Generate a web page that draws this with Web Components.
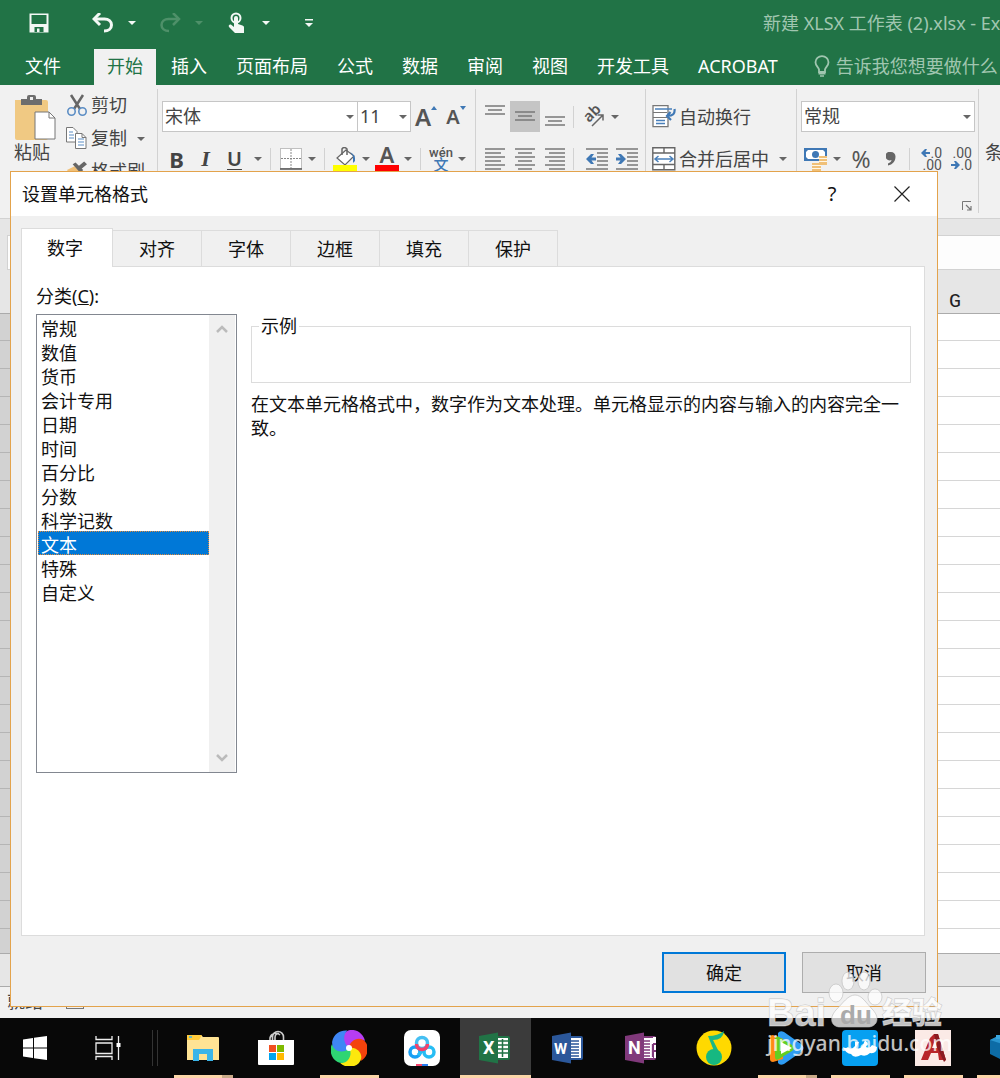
<!DOCTYPE html>
<html lang="zh-CN">
<head>
<meta charset="utf-8">
<title>设置单元格格式</title>
<style>
    body {
        margin: 0;
        font: 18px/24px "Noto Sans", "Noto Sans CJK SC", sans-serif;
        color: #444;
    }
</style>
</head>
<body>
<desktop-screen>
    <excel-window>
        <format-dialog slot="dialog" heading="设置单元格格式">
            <category-list slot="side"></category-list>
            <p slot="main">在文本单元格格式中，数字作为文本处理。单元格显示的内容与输入的内容完全一致。</p>
        </format-dialog>
    </excel-window>
    <task-bar slot="bar"></task-bar>
    <site-watermark slot="overlay"></site-watermark>
</desktop-screen>

<script>
const line = (x1, x2, y) => `<path d="M${x1} ${y}H${x2}" stroke="#777" stroke-width="1.5"/>`;

// name: [width, height, markup]
const ICONS = {
    caret: [8, 4, `<path d="M0 0h8L4 4z" fill="currentColor"/>`],
    save: [20, 20, `<path d="M.5 .5h19v19H.5z" fill="#f3f8f5"/><path d="M2.500 2h15v9h-15zM5.500 14h9v5h-4v-3.500h-2.500V19H5.500z" fill="#217346"/>`],
    undo: [22, 20, `<path d="M2 6h10.500c4 0 7 2.500 7 6s-3 6-7.500 6" fill="none" stroke="currentColor" stroke-width="3"/><path d="M8 0L2 6l6 6" fill="none" stroke="currentColor" stroke-width="3"/>`],
    redo: [22, 20, `<path d="M20 6H9.500c-4 0-7 2.500-7 6s3 6 7.500 6" fill="none" stroke="currentColor" stroke-width="2.500"/><path d="M14 0l6 6-6 6" fill="none" stroke="currentColor" stroke-width="2.500"/>`],
    touch: [18, 22, `<circle cx="8" cy="6" r="4.500" fill="none" stroke="#f3f8f5" stroke-width="2"/><path d="M6 6a2 2 0 0 1 4 0v6l4.500 1.500c1 .5 1.500 1 1.500 2V21H7l-6-6c-1-2 1-3 2.500-2l2.500 2z" fill="#f3f8f5"/>`],
    customize: [8, 8, `<path d="M0 0h8v1.500H0zM0 4h8L4 8z" fill="currentColor"/>`],
    bulb: [16, 22, `<path d="M5 17v-2.500C4.500 12 1.500 11 1.500 7.200a6.500 6 0 0 1 13 0C14.500 11 11.500 12 11 14.500V17z" fill="none" stroke="currentColor" stroke-width="1.800"/><path d="M4.500 17.500h7v2h-7zM6 20.200h4v1.500H6z" fill="currentColor"/>`],
    paste: [42, 46, `<path d="M1 6h31q2 0 2 2v36q0 2-2 2H3q-2 0-2-2z" fill="#f0c983"/><path d="M7 11V5h6V3q0-2 2-2h5q2 0 2 2v2h6v6z" fill="#6d6d6d"/><rect x="16" y="3" width="3" height="3" fill="#eee"/><path d="M21 18h14l6 6v21H21z" fill="#fff" stroke="#777"/><path d="M35 18v6h6" fill="none" stroke="#777"/>`],
    cut: [20, 22, `<path d="M4 1l9 14M16 1L7 15" stroke="#666" stroke-width="2.500"/><circle cx="4.500" cy="17.500" r="3.700" fill="none" stroke="#5b8dc4" stroke-width="1.600"/><circle cx="15.500" cy="17.500" r="3.700" fill="none" stroke="#5b8dc4" stroke-width="1.600"/>`],
    copy: [21, 22, `<path d="M.5 .5H7l4 4V15H.5z" fill="#fff" stroke="#777"/><path d="M3 5h4M3 8h5M3 11h5" stroke="#5b8dc4"/><path d="M9.500 6.500H16l4 4v11H9.500z" fill="#fff" stroke="#777"/><path d="M16 6.500v4h4" fill="none" stroke="#777"/><path d="M12 12h6M12 15h6M12 18h6" stroke="#5b8dc4"/>`],
    brush: [22, 20, `<path d="M1 9l8-4 6 6-6 8z" fill="#f0c078"/><path d="M7 3l3-2 8 8-3 3zM13 5l6-5 3 3-6 5z" fill="#666"/>`],
    borders: [22, 22, `<path d="M.5 .5h21v20H.5z" fill="#fff" stroke="#888" stroke-dasharray="1 1"/><path d="M11 1v19M1 10.500h20" stroke="#888" stroke-dasharray="2 1"/><path d="M0 21h22" stroke="#555" stroke-width="1.500"/>`],
    fill: [24, 24, `<path d="M13 3L4 11l8 7 9-9z" fill="#fff" stroke="#666" stroke-width="1.200"/><path d="M9 8V2q2-3 5 0v6" fill="none" stroke="#666" stroke-width="1.500"/><path d="M17 5q6 3 5 9l-2 2V9z" fill="#3c76b5"/><path d="M0 18h24v6H0z" fill="#ff0"/>`],
    wrap: [24, 23, `<path d="M1 .7h15v21H1z" fill="#fff" stroke="#777" stroke-width="1.300"/><path d="M1 7.500h14M1 12.500h14" stroke="#777"/><path d="M3 4h17M4 15.500h9M4 18.500h9" stroke="#4a80ba" stroke-width="1.300"/><path d="M22.500 4q1 7-7 7M18.500 7L15 11l4 4" fill="none" stroke="#3f78b5" stroke-width="2.200"/>`],
    merge: [24, 24, `<path d="M.8 .8h22v22H.8zM.8 6h22M.8 17.500h22M12 1v5M12 17.500V23" fill="#fff" stroke="#666" stroke-width="1.400"/><path d="M3 12h18M6.500 9L3 12l3.500 3M17.500 9l3.500 3-3.500 3" fill="none" stroke="#4a80ba" stroke-width="1.500"/>`],
    top: [20, 30, line(0, 20, 4) + line(3, 17, 8) + line(0, 20, 12)],
    middle: [20, 30, line(0, 20, 10) + line(3, 17, 14) + line(0, 20, 18)],
    bottom: [20, 30, line(0, 20, 15) + line(3, 17, 19) + line(0, 20, 23)],
    left: [20, 22, [1, 9, 17].map(y => line(0, 20, y) + line(0, 16, y + 4)).join("")],
    center: [20, 22, [1, 9, 17].map(y => line(0, 20, y) + line(3, 17, y + 4)).join("")],
    right: [20, 22, [1, 9, 17].map(y => line(0, 20, y) + line(4, 20, y + 4)).join("")],
    outdent: [22, 22, line(0, 22, 1) + line(11, 22, 5) + line(11, 22, 9) + line(11, 22, 13) + line(11, 22, 17) + line(0, 22, 21) + `<path d="M0 11l5-5h3L5.500 9.500H10v3H5.500L8 16H5z" fill="#3f78b5"/>`],
    indent: [22, 22, line(0, 22, 1) + line(11, 22, 5) + line(11, 22, 9) + line(11, 22, 13) + line(11, 22, 17) + line(0, 22, 21) + `<path d="M10 11L5 6H2l2.500 3.500H0v3h4.500L2 16h3z" fill="#3f78b5"/>`],
    orient: [22, 22, `<text x="0" y="0" transform="translate(6 17) rotate(-45)" font-size="15" font-weight="600" fill="#555">ab</text><path d="M9 20L20 9M14.500 9H20v5.500" fill="none" stroke="#666" stroke-width="1.500"/>`],
    money: [24, 24, `<path d="M0 1h23v13H0z" fill="#3f78b5"/><path d="M4 3h15l2 2v5l-2 2H4l-2-2V5z" fill="#fff"/><circle cx="11.500" cy="7.500" r="3.500" fill="#3f78b5"/><path d="M15 9h8v9h-8zM8 16h9v8H8z" fill="#f0c078"/><path d="M15 11.500h8M15 14.500h8M8 18.500h9M8 21.500h9" stroke="#fff7e6"/>`],
    comma: [10, 14, `<path d="M5 0a4.500 4.500 0 0 1 4.500 4.500c0 5-3 8-7.500 9v-2c2-.7 3.500-2 3.500-3.500A4.300 4.300 0 1 1 5 0z" fill="#666"/>`],
    less: [9, 8, `<path d="M0 4l4-4h2L4.500 3H9v2H4.500L6 8H4z" fill="#3f78b5"/>`],
    more: [9, 8, `<path d="M9 4L5 0H3l1.500 3H0v2h4.500L3 8h2z" fill="#3f78b5"/>`],
    launcher: [10, 10, `<path d="M.5 9V.5H9" fill="none" stroke="#777"/><path d="M4 4l5 5M9 5v4H5" fill="none" stroke="#777" stroke-width="1.200"/>`],
    close: [16, 16, `<path d="M.5 .5l15 15M15.500 .5l-15 15" stroke="#222" stroke-width="1.200"/>`],
    up: [12, 8, `<path d="M1 7l5-5 5 5" fill="none" stroke="#bbb" stroke-width="2.500"/>`],
    down: [12, 8, `<path d="M1 1l5 5 5-5" fill="none" stroke="#bbb" stroke-width="2.500"/>`],
    windows: [26, 26, `<path d="M1 4.500l10-1.500v9.500H1zM12 2.800L25 1v11.500H12zM1 13.500h10V23L1 21.500zM12 13.500h13V25l-13-1.800z" fill="#fff"/>`],
    taskview: [26, 26, `<path d="M1 1v3.500h16V1M1 25v-3.500h16V25M1 8h16v10.500H1zM23.500 1v24" fill="none" stroke="#eee" stroke-width="1.300"/><rect x="21.500" y="8" width="4" height="4" fill="#fff"/>`],
    explorer: [34, 28, `<path d="M1 2q0-1 1-1h13l2 2h15q1 0 1 1v22H1z" fill="#ffe394"/><path d="M1 1h15l-3 5H1z" fill="#ffcb3d"/><path d="M3 3h3" stroke="#3ab5e9" stroke-width="1.500"/><path d="M7 27V15h20v12h-6v-7h-8v7z" fill="#3ab5e9"/>`],
    store: [36, 36, `<path d="M12 12V8a6 6 0 0 1 10-3M14.500 12V7a5.500 5.500 0 0 1 11 0v5M17 12V7.500a4 4 0 0 1 4-4" fill="none" stroke="#ccc" stroke-width="1.600"/><path d="M0 10h36v24q0 1-1 1H1q-1 0-1-1z" fill="#fff"/><path d="M11 15h7v7h-7z" fill="#f25022"/><path d="M19 15h7v7h-7z" fill="#7fba00"/><path d="M11 23h7v7h-7z" fill="#00a4ef"/><path d="M19 23h7v7h-7z" fill="#ffb900"/>`],
    pinwheel: [36, 36, ["#b63df2", "#f4430c", "#fce80e", "#2ed573", "#3f86f5"].map((c, i) => `<path d="M18 18C10 15 9 2 19 0c8-1 14 5 15 11-6-3-13 0-16 7z" fill="${c}" transform="rotate(${i * 72} 18 18)"/>`).join("") + `<circle cx="18" cy="18" r="3" fill="#fff"/>`],
    netdisk: [36, 36, `<rect width="36" height="36" rx="7" fill="#fff"/><circle cx="11" cy="22" r="5" fill="none" stroke="#18a0f5" stroke-width="3.500"/><circle cx="25" cy="22" r="5" fill="none" stroke="#27bdf4" stroke-width="3.500"/><path d="M14 25l8-7" stroke="#27bdf4" stroke-width="3"/><circle cx="18" cy="13" r="5.500" fill="none" stroke="#45bff2" stroke-width="3.500"/><path d="M12.500 14a5.500 5.500 0 0 0 11 0" fill="none" stroke="#f4426b" stroke-width="3.500"/><path d="M12 34h6v2h-6z" fill="#f4426b"/><path d="M18 34h6v2h-6z" fill="#287df0"/>`],
    excel: [34, 32, `<path d="M18 4h12q2 0 2 2v20q0 2-2 2H18z" fill="#217346"/><path d="M19 6h11v20H19z" fill="#fff"/><path d="M19 9h11M19 13h11M19 17h11M19 21h11M24.500 7v18" stroke="#217346" stroke-width="1.500"/><path d="M1 4l19-3.500v31L1 28z" fill="#217346"/><text x="5" y="22" font-size="18" font-weight="700" fill="#fff" font-family="Roboto, sans-serif">X</text>`],
    word: [34, 32, `<path d="M18 4h12q2 0 2 2v20q0 2-2 2H18z" fill="#2b579a"/><path d="M19 6h11v20H19z" fill="#fff"/><path d="M19 9h9M19 12h9M19 15h9M19 18h9M19 21h9M19 24h9" stroke="#2b579a" stroke-width="1.300"/><path d="M1 4l19-3.500v31L1 28z" fill="#2b579a"/><text x="3" y="22" font-size="15" font-weight="700" fill="#fff" font-family="Roboto, sans-serif">W</text>`],
    onenote: [34, 32, `<path d="M18 4h12q2 0 2 2v20q0 2-2 2H18z" fill="#80397b"/><path d="M19 6h10v20H19zM29 5h3v6h-3zM30 13h2v5h-2zM30 20h2v6h-2z" fill="#fff"/><path d="M19 9h7M19 12h7M19 15h7M19 18h7M19 21h7M19 24h7M28.500 12v13" stroke="#80397b" stroke-width="1.300"/><path d="M1 4l19-3.500v31L1 28z" fill="#80397b"/><text x="4" y="22" font-size="18" font-weight="700" fill="#fff" font-family="Roboto, sans-serif">N</text>`],
    music: [36, 36, `<circle cx="18" cy="18" r="17.500" fill="#ffd900"/><path d="M28 1q-1 9-11 9l7 14-4 2L12 6q10 0 16-5z" fill="#1cb784"/><circle cx="18" cy="27" r="8" fill="#16b881"/>`],
    video: [36, 36, `<path d="M9 3q2-3 6-1l17 12q5 4 0 8L15 34q-4 2-6-1z" fill="#2e9cf3"/><path d="M1 8q0-3 3-3l10 4v20L4 32q-3 0-3-3z" fill="#ff8a14"/><path d="M6 9q0-4 4-2l13 8q4 3 0 6l-13 8q-4 2-4-2z" fill="#65cf21"/><path d="M12 12l11 6-11 6z" fill="#fff"/>`],
    whale: [36, 36, `<rect width="36" height="36" rx="4" fill="#06a0f1"/><path d="M1 17q3 2 5 0 3 4 7-1v-4h4l-3 6q4 2 7-3l2-5 3 3-2 4q4 2 6-2l5 2q0 7-7 6-4 4-9 2-7 4-10-1-5 0-8-7z" fill="#fff"/>`],
    autocad: [36, 36, `<path d="M0 0h36v36H0z" fill="#fbeae6"/><path d="M6 30L15 8l4-4h4l8 26h-7l-1-7h-7l-3 7zm11-12h5l-2-8z" fill="#b82529" fill-rule="evenodd"/><path d="M19 4h4l8 26-2 2-7-15z" fill="#8a1a20"/>`],
    bricks: [36, 36, `<path d="M2 10l10-5 22 3v16L18 32 2 24z" fill="#0d6ca6"/><path d="M2 10l10-5 22 3-16 7z" fill="#2a95cf"/><path d="M8 5h5v4H8z" fill="#3aa6dd"/>`]
};

const SHARED = `
    * { box-sizing: border-box; }
    button, select { font: inherit; color: inherit; }
    button { border: 0; padding: 0; background: none; }
`;

class BaseElement extends HTMLElement {
    constructor() {
        super();
        this.attachShadow({ mode: "open" });
    }

    connectedCallback() {
        this.shadowRoot.innerHTML = `<style>${SHARED}</style>${this.render()}`;
    }
}

class UiIcon extends BaseElement {
    render() {
        const [w, h, markup] = ICONS[this.getAttribute("name")];
        return `
            <style>
                :host { display: inline-flex; flex: none; }
                svg { display: block; }
            </style>
            <svg width="${w}" height="${h}" viewBox="0 0 ${w} ${h}" aria-hidden="true">${markup}</svg>
        `;
    }
}

class DesktopScreen extends BaseElement {
    render() {
        return `
            <style>
                :host {
                    display: flex;
                    flex-direction: column;
                    position: relative;
                    min-height: 100vh;
                    overflow: hidden;
                }
                ::slotted(excel-window) { flex: 1; }
            </style>
            <slot></slot>
            <slot name="bar"></slot>
            <slot name="overlay"></slot>
        `;
    }
}

class ExcelWindow extends BaseElement {
    render() {
        return `
            <style>
                :host {
                    display: flex;
                    flex-direction: column;
                    position: relative;
                    background: #f1f1f1;
                    min-width: 0;
                }
                sheet-grid { flex: 1; }
                .formula {
                    height: 52px;
                    padding: 16px 0 0 7px;
                    background: #e6e6e6;
                    border-top: 1px solid #d2d2d2;
                }
                .formula div {
                    height: 35px;
                    background: #fdfdfd;
                    border: 1px solid #d2d2d2;
                    border-right: 0;
                }
                .sheets {
                    height: 34px;
                    background: #e6e6e6;
                    border: solid #ababab;
                    border-width: 1px 0;
                }
                .status {
                    display: flex;
                    align-items: center;
                    gap: 23px;
                    height: 31px;
                    padding: 0 0 4px 7px;
                }
                .macro {
                    width: 18px;
                    height: 16px;
                    border: 1px solid #777;
                }
                /* modeless window floating above the workbook */
                ::slotted(format-dialog) {
                    position: absolute;
                    inset: 171px 62px 11px 10px;
                }
            </style>
            <title-bar></title-bar>
            <ribbon-tabs></ribbon-tabs>
            <ribbon-bar></ribbon-bar>
            <div class="formula"><div></div></div>
            <sheet-grid></sheet-grid>
            <div class="sheets"></div>
            <div class="status"><span>就绪</span><span class="macro"></span></div>
            <slot name="dialog"></slot>
        `;
    }
}

class TitleBar extends BaseElement {
    render() {
        return `
            <style>
                :host {
                    display: flex;
                    align-items: center;
                    height: 49px;
                    padding: 0 0 3px 24px;
                    background: #217346;
                    color: #f3f8f5;
                    white-space: nowrap;
                    overflow: hidden;
                }
                button {
                    display: flex;
                    align-items: center;
                    justify-content: center;
                    flex: none;
                    width: 30px;
                    height: 30px;
                }
                .split { display: flex; gap: 4px; margin-left: 34px; }
                .split + .split { margin-left: 13px; }
                .split button + button { width: 20px; }
                .off { color: #4e9069; }
                .more { margin-left: 18px; }
                .title {
                    width: 237px;
                    margin-left: auto;
                    color: #a0c6b0;
                    overflow: hidden;
                }
            </style>
            <button aria-label="保存"><ui-icon name="save"></ui-icon></button>
            <div class="split">
                <button aria-label="撤消"><ui-icon name="undo"></ui-icon></button>
                <button aria-label="撤消列表"><ui-icon name="caret"></ui-icon></button>
            </div>
            <div class="split off">
                <button aria-label="恢复"><ui-icon name="redo"></ui-icon></button>
                <button aria-label="恢复列表"><ui-icon name="caret"></ui-icon></button>
            </div>
            <div class="split">
                <button aria-label="触摸模式"><ui-icon name="touch"></ui-icon></button>
                <button aria-label="触摸选项"><ui-icon name="caret"></ui-icon></button>
            </div>
            <button class="more" aria-label="自定义快速访问工具栏"><ui-icon name="customize"></ui-icon></button>
            <div class="title">新建 XLSX 工作表 (2).xlsx - Excel</div>
        `;
    }
}

class RibbonTabs extends BaseElement {
    render() {
        const tabs = ["开始", "插入", "页面布局", "公式", "数据", "审阅", "视图", "开发工具", "ACROBAT"];
        return `
            <style>
                :host {
                    display: flex;
                    gap: 1px;
                    height: 36px;
                    background: #217346;
                    color: #fff;
                    white-space: nowrap;
                    overflow: hidden;
                }
                button { flex: none; padding: 0 14px 2px; }
                .file { padding: 0 32px 2px 25px; }
                .active { padding: 0 13px 2px; background: #f1f1f1; color: #217346; }
                .tell {
                    display: flex;
                    align-items: center;
                    gap: 6px;
                    margin-left: 7px;
                    color: #a0c6b0;
                }
            </style>
            <button class="file">文件</button>
            ${tabs.map((t, i) => `<button class="${i ? "" : "active"}">${t}</button>`).join("")}
            <button class="tell"><ui-icon name="bulb"></ui-icon>告诉我您想要做什么</button>
        `;
    }
}

class RibbonGroup extends BaseElement {
    render() {
        return `
            <style>
                :host {
                    display: flex;
                    flex: none;
                    margin: 4px 0 5px;
                    padding: 0 4px;
                    border-right: 1px solid #d2d2d2;
                }
            </style>
            <slot></slot>
        `;
    }
}

class ComboBox extends BaseElement {
    render() {
        return `
            <style>
                :host { display: grid; flex: none; height: 31px; }
                select, ui-icon { grid-area: 1 / 1; }
                select {
                    appearance: none;
                    width: 100%;
                    padding: 0 0 2px 2px;
                    border: 1px solid #c6c6c6;
                    border-radius: 0;
                    background: #fff;
                }
                ui-icon {
                    place-self: center end;
                    margin-right: 4px;
                    color: #666;
                    pointer-events: none;
                }
            </style>
            <select aria-label="${this.getAttribute("label")}"><option>${this.getAttribute("value")}</option></select>
            <ui-icon name="caret"></ui-icon>
        `;
    }
}

class RibbonBar extends BaseElement {
    tool(name, label) {
        return `<button class="tool" aria-label="${label}"><ui-icon name="${name}"></ui-icon></button>`;
    }

    wide(name, label, extra = "") {
        return `<button class="tool wide ${extra}" aria-label="${label}"><ui-icon name="${name}"></ui-icon></button>`;
    }

    render() {
        const caret = `<button class="caret" aria-label="更多"><ui-icon name="caret"></ui-icon></button>`;
        return `
            <style>
                :host {
                    display: flex;
                    height: 133px;
                    background: #f1f1f1;
                    white-space: nowrap;
                    overflow: hidden;
                }
                button { display: flex; align-items: center; flex: none; }
                .rows {
                    display: flex;
                    flex-direction: column;
                    gap: 11px;
                    padding-top: 12px;
                }
                .row { display: flex; align-items: center; height: 31px; }
                .tool { justify-content: center; width: 24px; height: 31px; }
                .wide { width: 30px; }
                .on { background: #c5c5c5; }
                .caret { justify-content: center; width: 18px; height: 31px; color: #666; }
                .sep { width: 1px; height: 22px; margin: 0 8px 0 3px; background: #d2d2d2; }
                .clip { padding: 0 7px 0 14px; }
                .paste { flex-direction: column; margin-top: 5px; align-self: flex-start; align-items: flex-start; }
                .small { margin-left: 10px; }
                .small .row { height: 33px; }
                .small ui-icon { width: 21px; justify-content: center; }
                .small .text { gap: 4px; padding-bottom: 1px; }
                .text { gap: 3px; }
                .text + .caret { margin-left: 5px; }
                .family { width: 196px; }
                .size { width: 54px; margin-left: -1px; }
                .format { width: 174px; }
                .biu { width: 29px; font-size: 22px; font-weight: 700; color: #444; }
                .italic { font-family: "Liberation Serif", serif; font-style: italic; }
                .under { font-size: 20px; text-decoration: underline; text-underline-offset: 3px; text-decoration-thickness: 1px; font-weight: 600; }
                .grow { font-size: 24px; font-weight: 600; color: #555; }
                .shrink { font-size: 20px; }
                .grow::after {
                    content: "";
                    align-self: flex-start;
                    margin-top: 5px;
                    border: 3px solid transparent;
                    border-top: 0;
                    border-bottom: 4px solid #3f78b5;
                }
                .shrink::after { border-top: 4px solid #3f78b5; border-bottom: 0; }
                .color {
                    align-self: flex-start;
                    height: 28px;
                    font-size: 22px;
                    line-height: 20px;
                    font-weight: 600;
                    color: #555;
                    border-bottom: 6px solid #f00;
                }
                .wen { flex-direction: column; font: 500 13px/13px Roboto, "Noto Sans CJK SC", sans-serif; color: #555; }
                .wen b { font-size: 15px; line-height: 13px; color: #3f78b5; font-weight: 500; }
                .percent { font-size: 23px; color: #555; }
                .number { padding-right: 3px; }
                .number .rows { height: 100%; padding-bottom: 2px; }
                .number .row + .row { padding-left: 3px; }
                .digits { flex-direction: column; font: 14px/12px Roboto, sans-serif; color: #555; }
                .digits + .digits { margin-left: 6px; }
                .digits span { display: flex; align-items: center; justify-content: flex-end; width: 24px; }
                .launch { align-self: flex-end; margin-top: auto; margin-right: 3px; }
                .align { padding-right: 3px; }
                .merge { padding-left: 6px; }
                .cond { align-self: flex-start; padding: 55px 0 0 6px; }
            </style>
            <ribbon-group class="clip">
                <button class="paste"><ui-icon name="paste"></ui-icon>粘贴</button>
                <div class="small">
                    <div class="row"><button class="text"><ui-icon name="cut"></ui-icon>剪切</button></div>
                    <div class="row"><button class="text"><ui-icon name="copy"></ui-icon>复制</button>${caret}</div>
                    <div class="row"><button class="text"><ui-icon name="brush"></ui-icon>格式刷</button></div>
                </div>
            </ribbon-group>
            <ribbon-group>
                <div class="rows">
                    <div class="row">
                        <combo-box class="family" label="字体" value="宋体"></combo-box>
                        <combo-box class="size" label="字号" value="11"></combo-box>
                        <button class="tool wide grow" aria-label="增大字号">A</button>
                        <button class="tool wide grow shrink" aria-label="减小字号">A</button>
                    </div>
                    <div class="row">
                        <button class="tool biu">B</button>
                        <button class="tool biu italic">I</button>
                        <button class="tool biu under">U</button>${caret}
                        <span class="sep"></span>
                        ${this.tool("borders", "边框")}${caret}
                        <span class="sep"></span>
                        ${this.tool("fill", "填充颜色")}${caret}
                        <button class="tool color" aria-label="字体颜色">A</button>${caret}
                        <span class="sep"></span>
                        <button class="tool wen"><span>wén</span><b>文</b></button>${caret}
                    </div>
                </div>
            </ribbon-group>
            <ribbon-group class="align">
                <div class="rows">
                    <div class="row">
                        ${this.wide("top", "顶端对齐")}${this.wide("middle", "垂直居中", "on")}${this.wide("bottom", "底端对齐")}
                        <span class="sep"></span>
                        ${this.tool("orient", "方向")}${caret}
                    </div>
                    <div class="row">
                        ${this.wide("left", "左对齐")}${this.wide("center", "居中")}${this.wide("right", "右对齐")}
                        <span class="sep"></span>
                        ${this.wide("outdent", "减少缩进量")}${this.wide("indent", "增加缩进量")}
                    </div>
                </div>
            </ribbon-group>
            <ribbon-group class="merge">
                <div class="rows">
                    <div class="row"><button class="text"><ui-icon name="wrap"></ui-icon>自动换行</button></div>
                    <div class="row"><button class="text"><ui-icon name="merge"></ui-icon>合并后居中</button>${caret}</div>
                </div>
            </ribbon-group>
            <ribbon-group class="number">
                <div class="rows">
                    <div class="row"><combo-box class="format" label="数字格式" value="常规"></combo-box></div>
                    <div class="row">
                        ${this.tool("money", "会计数字格式")}${caret}
                        <button class="tool wide percent">%</button>
                        ${this.wide("comma", "千位分隔样式")}
                        <span class="sep"></span>
                        <button class="tool digits"><span><ui-icon name="less"></ui-icon>.0</span><span>.00</span></button>
                        <button class="tool digits"><span>.00</span><span><ui-icon name="more"></ui-icon>.0</span></button>
                    </div>
                    <button class="launch" aria-label="数字格式设置"><ui-icon name="launcher"></ui-icon></button>
                </div>
            </ribbon-group>
            <button class="cond">条</button>
        `;
    }
}

class SheetGrid extends BaseElement {
    render() {
        return `
            <style>
                :host { display: flex; flex-direction: column; }
                .head {
                    display: flex;
                    align-items: flex-end;
                    justify-content: flex-end;
                    height: 44px;
                    padding-right: 39px;
                    border-bottom: 1px solid #ababab;
                    background: #e6e6e6;
                    color: #222;
                    font: 20px/22px "Liberation Mono", monospace;
                }
                .body { display: flex; flex: 1; }
                .rows, .cells {
                    background: repeating-linear-gradient(#fff 0 26px, #d6d6d6 26px 27px, #fff 27px 28px);
                }
                .rows {
                    width: 40px;
                    background: repeating-linear-gradient(#d2d2d2 0 26px, #b5b5b5 26px 27px, #d2d2d2 27px 28px);
                }
                .cells { flex: 1; }
            </style>
            <div class="head">G</div>
            <div class="body"><div class="rows"></div><div class="cells"></div></div>
        `;
    }
}

class FormatDialog extends BaseElement {
    render() {
        const tabs = ["数字", "对齐", "字体", "边框", "填充", "保护"];
        return `
            <style>
                :host {
                    display: flex;
                    flex-direction: column;
                    border: 1px solid #e3a34c;
                    background: #f0f0f0;
                    color: #111;
                }
                header {
                    display: flex;
                    align-items: center;
                    height: 44px;
                    padding: 0 12px 0 11px;
                    background: #fff;
                }
                h1 { flex: 1; margin: 0; font-size: 18px; font-weight: 400; }
                header button {
                    display: flex;
                    align-items: center;
                    justify-content: center;
                    width: 46px;
                    height: 44px;
                    font-size: 20px;
                }
                header button + button { margin-left: 24px; }
                nav { display: flex; align-items: flex-end; padding: 12px 10px 0; }
                nav button {
                    width: 89px;
                    height: 36px;
                    border: 1px solid #dcdcdc;
                    border-width: 1px 1px 0 0;
                }
                nav .active {
                    width: 92px;
                    height: 39px;
                    margin-bottom: -1px;
                    padding: 0 4px 1px 0;
                    border-left-width: 1px;
                    background: #fff;
                    z-index: 1;
                }
                main {
                    display: flex;
                    flex: 1;
                    gap: 14px;
                    margin: 0 12px 0 10px;
                    padding: 17px 13px 17px 14px;
                    border: 1px solid #dcdcdc;
                    background: #fff;
                }
                section { flex: 1; padding-top: 30px; }
                fieldset {
                    height: 69px;
                    margin: 0;
                    padding: 0 7px;
                    border: 1px solid #dcdcdc;
                }
                legend { padding: 0 2px; }
                ::slotted(p) { margin: 9px 0 0; }
                footer {
                    display: flex;
                    justify-content: flex-end;
                    gap: 16px;
                    padding: 16px 11px 13px;
                }
                footer button {
                    width: 124px;
                    height: 41px;
                    background: #e1e1e1;
                    border: 1px solid #adadad;
                }
                footer .primary { border: 2px solid #0078d7; }
            </style>
            <header>
                <h1>${this.getAttribute("heading")}</h1>
                <button>?</button>
                <button aria-label="关闭"><ui-icon name="close"></ui-icon></button>
            </header>
            <nav>${tabs.map((t, i) => `<button class="${i ? "" : "active"}">${t}</button>`).join("")}</nav>
            <main>
                <slot name="side"></slot>
                <section>
                    <fieldset><legend>示例</legend></fieldset>
                    <slot name="main"></slot>
                </section>
            </main>
            <footer>
                <button class="primary">确定</button>
                <button>取消</button>
            </footer>
        `;
    }
}

class CategoryList extends BaseElement {
    render() {
        const items = ["常规", "数值", "货币", "会计专用", "日期", "时间", "百分比", "分数", "科学记数", "文本", "特殊", "自定义"];
        return `
            <style>
                :host { display: block; width: 201px; }
                label { display: block; margin-bottom: 6px; }
                .box {
                    display: flex;
                    height: 459px;
                    padding: 0 1px;
                    border: 1px solid #828790;
                }
                select {
                    flex: 1;
                    min-width: 0;
                    padding: 0;
                    border: 0;
                    outline: 0;
                    background: #fff;
                    scrollbar-width: none;
                }
                option { height: 24px; min-height: 24px; padding: 0 3px; line-height: 22px; color: #111; }
                option:checked {
                    background: linear-gradient(#0078d7, #0078d7);
                    color: #fff;
                    -webkit-text-fill-color: #fff;
                    outline: 1px dotted #e08a3c;
                    outline-offset: -1px;
                }
                .scroll {
                    display: flex;
                    flex-direction: column;
                    justify-content: space-between;
                    align-items: center;
                    width: 26px;
                    padding: 10px 1px 10px 0;
                    background: #f0f0f0;
                }
                .scroll button { display: flex; }
            </style>
            <label for="list">分类(<u>C</u>):</label>
            <div class="box">
                <select id="list" size="12">
                    ${items.map(t => `<option${t === "文本" ? " selected" : ""}>${t}</option>`).join("")}
                </select>
                <div class="scroll">
                    <button aria-label="向上"><ui-icon name="up"></ui-icon></button>
                    <button aria-label="向下"><ui-icon name="down"></ui-icon></button>
                </div>
            </div>
        `;
    }
}

// state: "" | open | many (several windows) | active
class TaskApp extends BaseElement {
    render() {
        return `
            <style>
                :host { display: flex; flex: none; width: 71px; }
                button {
                    display: flex;
                    flex: 1;
                    align-items: center;
                    justify-content: center;
                    border-bottom: 3px solid transparent;
                    padding: 3px 2px 0 0;
                }
                :host([state=open]), :host([state=many]) { padding: 0 6px; }
                :host([state=open]) button { border-bottom-color: #fbd5a8; }
                :host([state=many]) button { border-image: linear-gradient(90deg, #fbd5a8 78%, #c9aa88 78%) 3; }
                :host([state=active]) button { background: #3b3b3b; border-bottom-color: #fbd5a8; }
            </style>
            <button aria-label="${this.getAttribute("label")}"><ui-icon name="${this.getAttribute("icon")}"></ui-icon></button>
        `;
    }
}

class TaskBar extends BaseElement {
    render() {
        const apps = [
            ["explorer", "文件资源管理器", "many"],
            ["store", "应用商店", ""],
            ["pinwheel", "浏览器", "open"],
            ["netdisk", "网盘", ""],
            ["excel", "Excel", "active"],
            ["word", "Word", ""],
            ["onenote", "OneNote", ""],
            ["music", "音乐", ""],
            ["video", "视频", "many"],
            ["whale", "词典", "open"],
            ["autocad", "AutoCAD", "open"],
            ["bricks", "工具", "open"]
        ];
        return `
            <style>
                :host {
                    display: flex;
                    gap: 2px;
                    height: 60px;
                    background: #080808;
                    overflow: hidden;
                }
                .grip {
                    flex: none;
                    align-self: center;
                    width: 6px;
                    height: 36px;
                    margin: 0 8px 0 6px;
                    border: solid #333;
                    border-width: 0 1px;
                }
            </style>
            <task-app icon="windows" label="开始"></task-app>
            <task-app icon="taskview" label="任务视图"></task-app>
            <span class="grip"></span>
            ${apps.map(([icon, label, state]) => `<task-app icon="${icon}" label="${label}" state="${state}"></task-app>`).join("")}
        `;
    }
}

class SiteWatermark extends BaseElement {
    render() {
        return `
            <style>
                :host {
                    position: absolute;
                    right: 54px;
                    bottom: 20px;
                    width: 179px;
                    pointer-events: none;
                }
                svg { display: block; overflow: visible; }
                text { fill: rgba(255, 255, 255, .75); stroke: rgba(170, 170, 170, .6); stroke-width: 1; paint-order: stroke; }
            </style>
            <svg width="179" height="90" viewBox="0 0 179 90" aria-hidden="true">
                <g fill="#fff" fill-opacity=".75" stroke="#bbb" stroke-opacity=".6">
                    <ellipse cx="69" cy="25" rx="7" ry="9"/>
                    <ellipse cx="81" cy="13" rx="6" ry="9"/>
                    <ellipse cx="97" cy="13" rx="6" ry="9"/>
                    <ellipse cx="108" cy="29" rx="7" ry="8"/>
                    <path d="M88 27c7 0 11 8 18 15 8 9 3 17-5 17H73c-8 0-12-8-4-17 7-7 12-15 19-15z"/>
                </g>
                <text x="0" y="58" font-size="38" font-weight="700" font-family="Liberation Sans, sans-serif">Bai</text>
                <text x="73" y="56" font-size="26" font-weight="700" font-family="Liberation Sans, sans-serif" style="fill: #aaa; stroke: none">du</text>
                <text x="115" y="55" font-size="30" font-weight="900">经验</text>
                <text x="0" y="83" font-size="21" font-weight="500" style="stroke: none">jingyan.baidu.com</text>
            </svg>
        `;
    }
}

customElements.define("ui-icon", UiIcon);
customElements.define("combo-box", ComboBox);
customElements.define("title-bar", TitleBar);
customElements.define("ribbon-tabs", RibbonTabs);
customElements.define("ribbon-group", RibbonGroup);
customElements.define("ribbon-bar", RibbonBar);
customElements.define("sheet-grid", SheetGrid);
customElements.define("category-list", CategoryList);
customElements.define("format-dialog", FormatDialog);
customElements.define("excel-window", ExcelWindow);
customElements.define("task-app", TaskApp);
customElements.define("task-bar", TaskBar);
customElements.define("site-watermark", SiteWatermark);
customElements.define("desktop-screen", DesktopScreen);
</script>
</body>
</html>
